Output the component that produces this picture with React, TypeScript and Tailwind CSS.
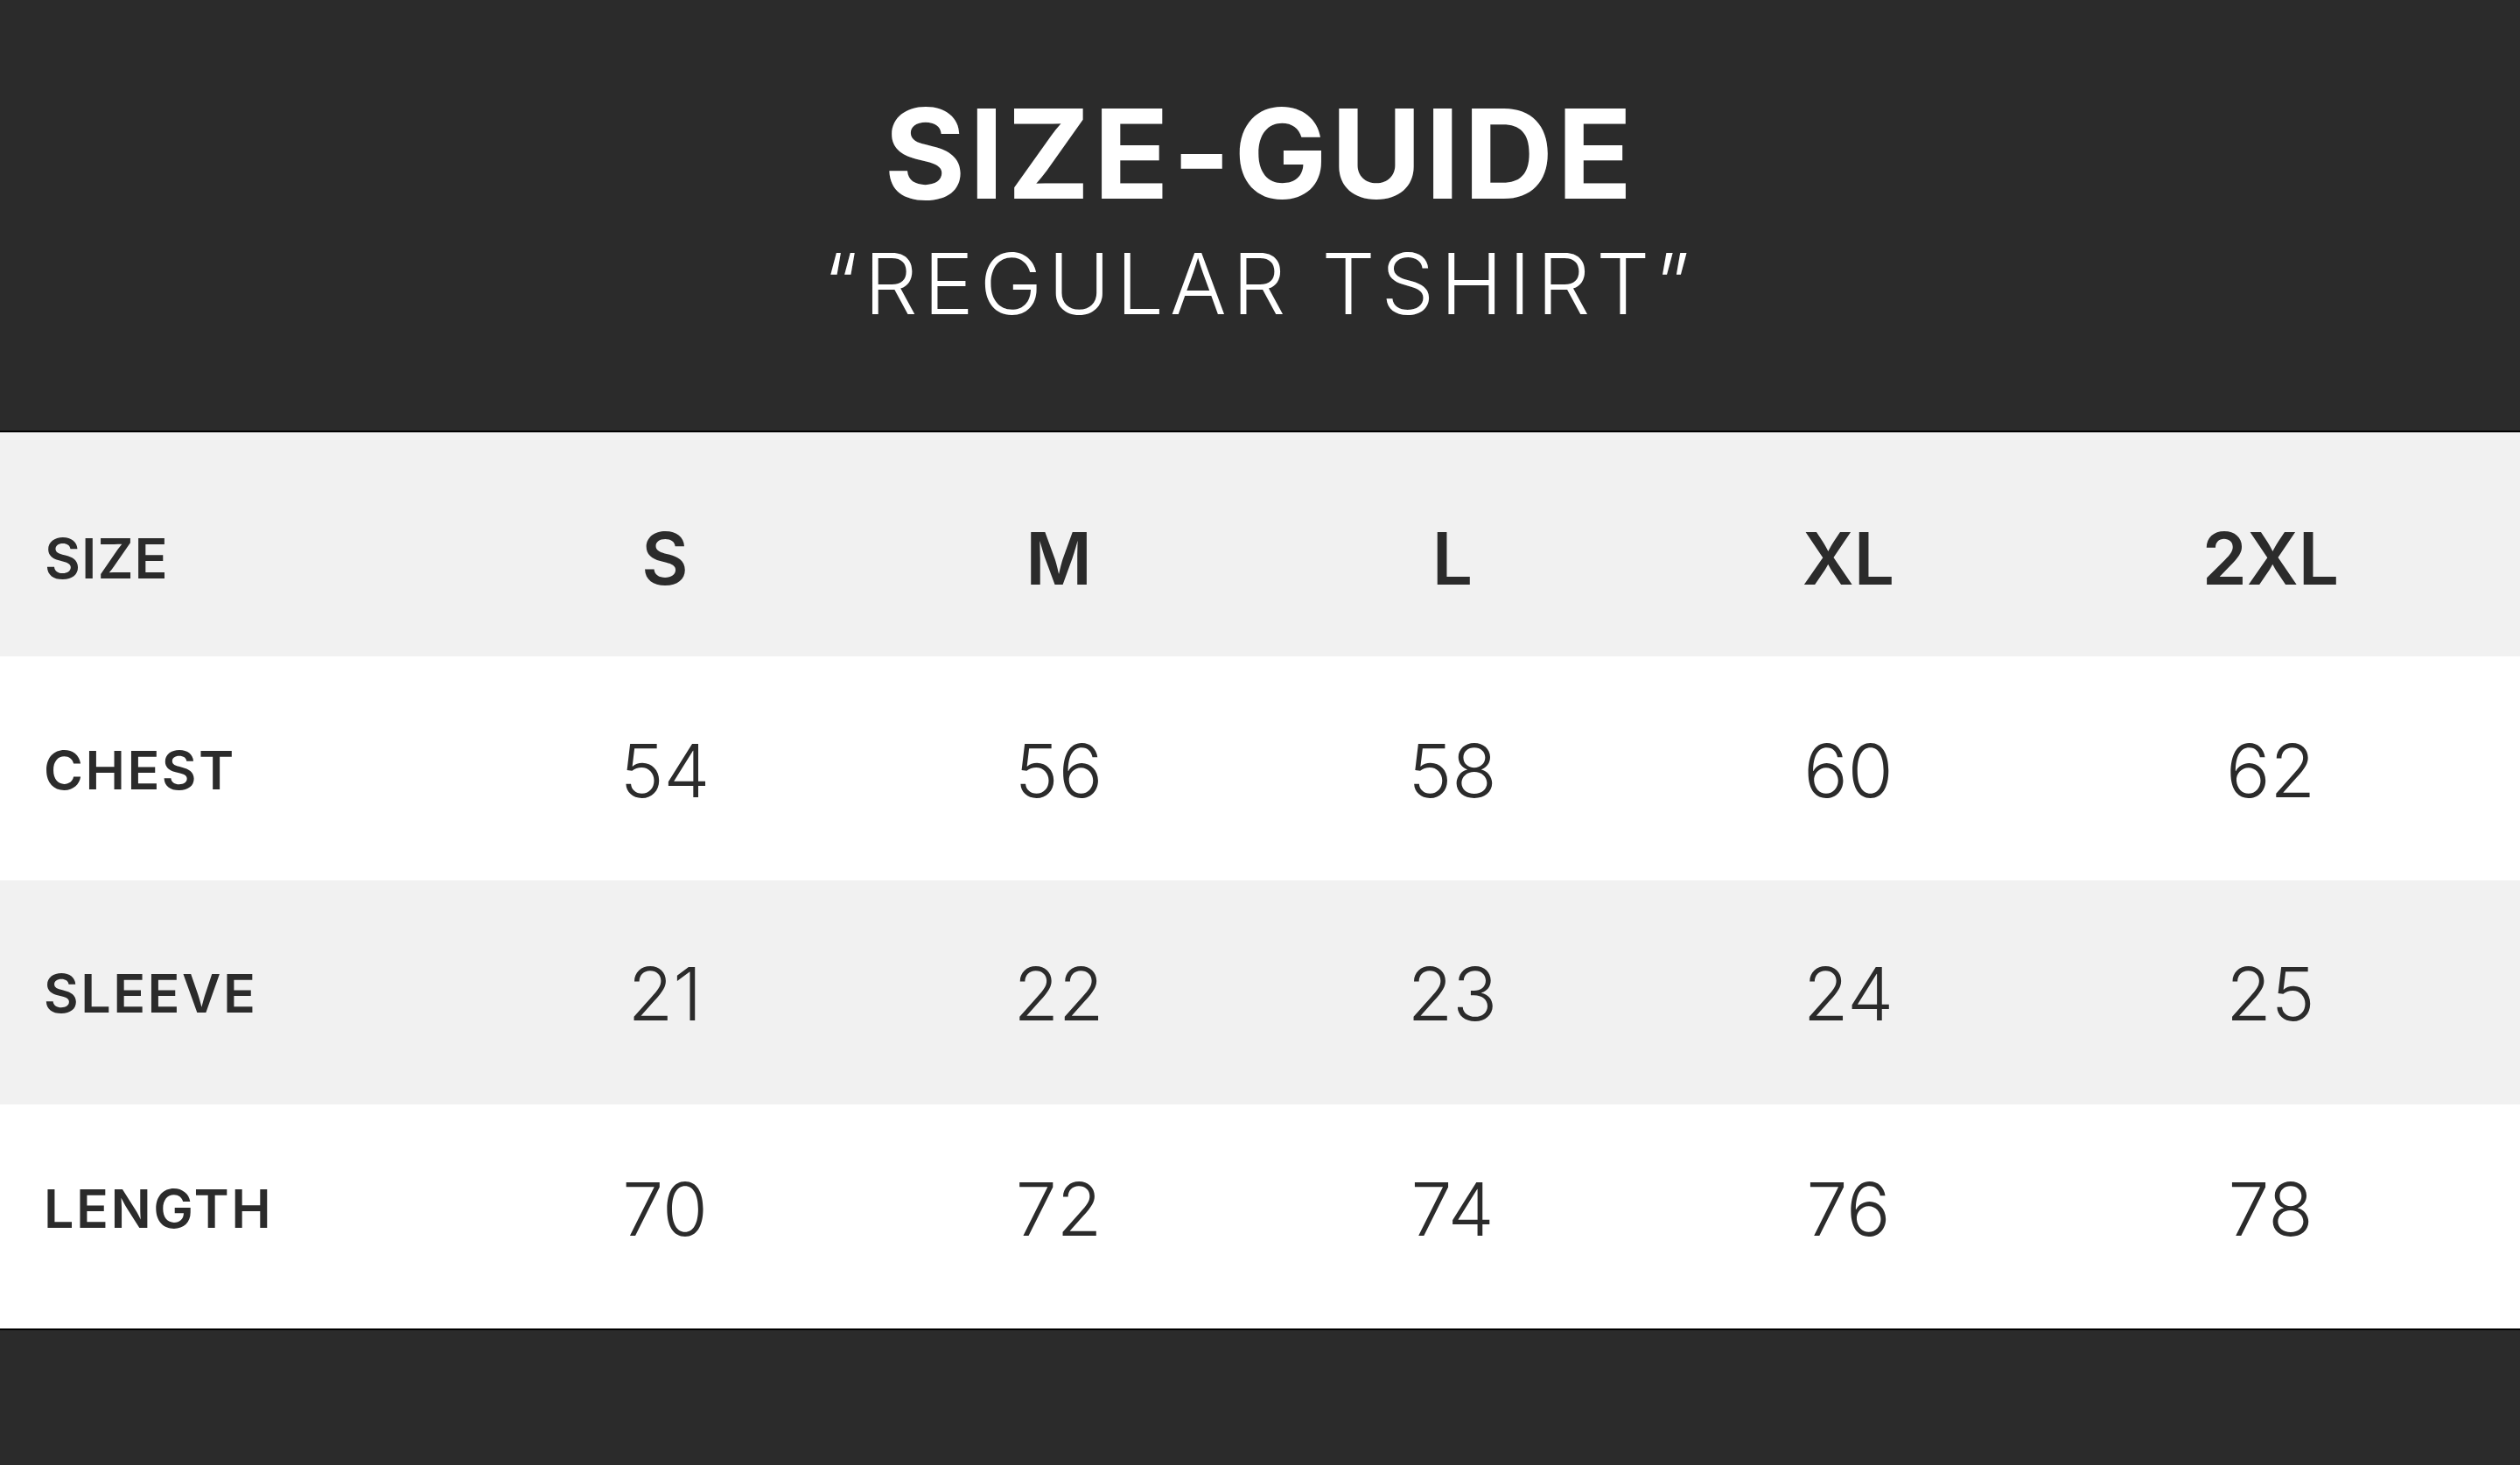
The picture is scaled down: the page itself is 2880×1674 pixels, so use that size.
import React from 'react';

const sizes = ['S', 'M', 'L', 'XL', '2XL'];

const rows = [
  { label: 'CHEST', values: ['54', '56', '58', '60', '62'], bg: 'bg-white', pad: 'pt-[6px]' },
  { label: 'SLEEVE', values: ['21', '22', '23', '24', '25'], bg: 'bg-[#f1f1f1]', pad: 'pt-[4px]' },
  { label: 'LENGTH', values: ['70', '72', '74', '76', '78'], bg: 'bg-white', pad: 'pb-[16px]' },
];

const gridCols = 'grid grid-cols-[535px_450px_450px_450px_455px_510px_1fr] h-[256px] items-center';

const App = () => {
  return (
    <div className="w-[2880px] h-[1674px] bg-[#2b2b2b] flex flex-col font-['Inter','Liberation_Sans',sans-serif] text-[#2b2b2b]">
      <header className="h-[494px] flex flex-col items-center pt-[104px] border-b-2 border-black">
        <h1 className="text-[142px] leading-none font-bold text-white tracking-[4px]">SIZE-GUIDE</h1>
        <p className="mt-[30px] text-[96px] leading-none font-light text-white tracking-[7px]">
          “REGULAR TSHIRT”
        </p>
      </header>

      <div className={`${gridCols} bg-[#f1f1f1]`}>
        <div className="pl-[51px] pt-[32px] text-[63px] font-semibold tracking-[1px]">SIZE</div>
        {sizes.map((s) => (
          <div key={s} className="text-center pt-[32px] text-[82px] font-semibold">
            {s}
          </div>
        ))}
        <div />
      </div>

      {rows.map((row) => (
        <div key={row.label} className={`${gridCols} ${row.bg}`}>
          <div className={`pl-[50px] ${row.pad} text-[61px] font-semibold tracking-[2.5px]`}>{row.label}</div>
          {row.values.map((v) => (
            <div key={v} className={`text-center ${row.pad} text-[84px] font-light`}>
              {v}
            </div>
          ))}
          <div />
        </div>
      ))}

      <div className="flex-1 border-t-2 border-black" />
    </div>
  );
};

export default App;
